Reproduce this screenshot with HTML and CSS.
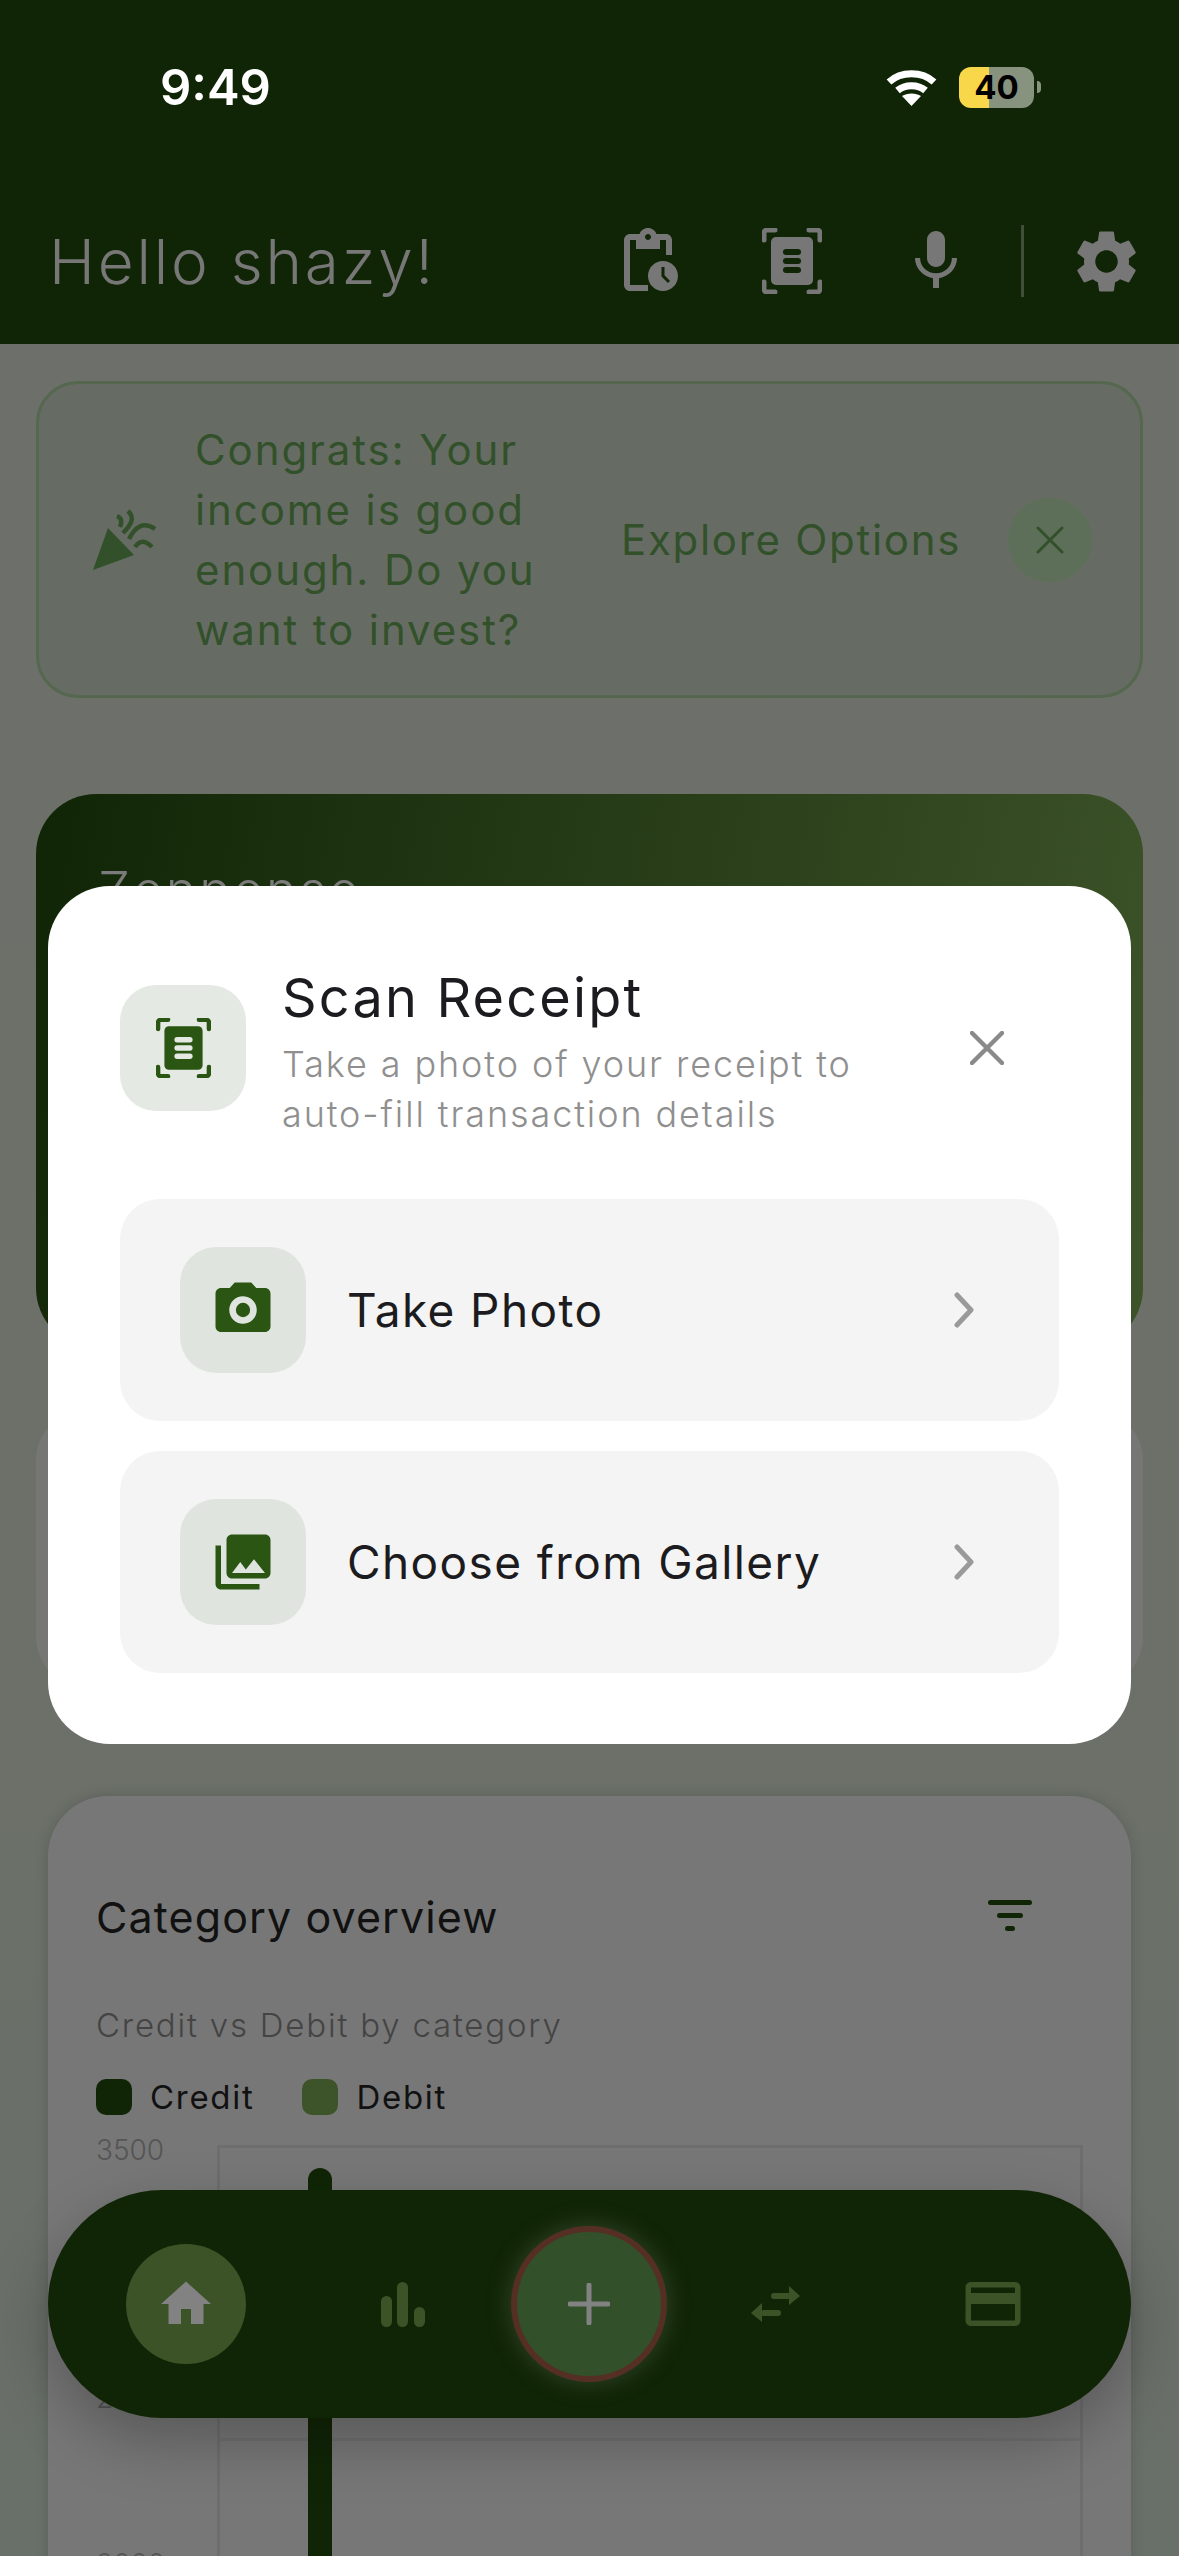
FILE: index.html
```html
<!DOCTYPE html>
<html lang="en">
<head>
    <meta charset="UTF-8">
    <title>Hello shazy</title>
    <link rel="stylesheet" href="styles.css">
</head>
<body>
<div id="screen">
    <div class="header">
        <div class="status-bar">
            <span class="time">9:49</span>
            <svg class="wifi" viewBox="0 0 51 37" width="51" height="37">
                <path d="M3 13 C15 2 36 2 48 13" fill="none" stroke="#fff" stroke-width="7"/>
                <path d="M11.5 21.5 C19 15 32 15 39.5 21.5" fill="none" stroke="#fff" stroke-width="7"/>
                <path d="M25.5 37 L16 27 C21 23.5 30 23.5 35 27 Z" fill="#fff"/>
            </svg>
            <div class="battery"><span>40</span></div>
            <i class="battery-nub"></i>
        </div>
        <div class="app-bar">
            <span class="hello">Hello shazy!</span>
            <svg class="bar-icon" viewBox="0 0 24 24" width="72" height="72"><path d="M17 12c-2.76 0-5 2.24-5 5s2.24 5 5 5 5-2.24 5-5-2.24-5-5-5zm1.65 7.35L16.5 17.2V14h1v2.79l1.85 1.85-.7.71zM18 3h-3.18C14.4 1.84 13.3 1 12 1s-2.4.84-2.82 2H6c-1.1 0-2 .9-2 2v15c0 1.1.9 2 2 2h6v-2H6V5h2v3h8V5h2v5h2V5c0-1.1-.9-2-2-2zm-6 2c-.55 0-1-.45-1-1s.45-1 1-1 1 .45 1 1-.45 1-1 1z"/></svg>
            <svg class="bar-icon scan-top" viewBox="0 0 60 66" width="60" height="66">
                <path d="M2 12V5a3 3 0 0 1 3-3h8M47 2h8a3 3 0 0 1 3 3v7M58 54v7a3 3 0 0 1-3 3h-8M13 64H5a3 3 0 0 1-3-3v-7" fill="none" stroke="#777" stroke-width="5" stroke-linecap="round"/>
                <rect x="9" y="9" width="42" height="48" rx="5"/>
                <rect x="21" y="21" width="18" height="6" rx="3" fill="#102506"/>
                <rect x="21" y="30" width="18" height="6" rx="3" fill="#102506"/>
                <rect x="21" y="39" width="18" height="6" rx="3" fill="#102506"/>
            </svg>
            <svg class="bar-icon mic" viewBox="0 0 24 24" width="72" height="72"><path d="M12 14c1.66 0 3-1.34 3-3V5c0-1.66-1.34-3-3-3S9 3.34 9 5v6c0 1.66 1.34 3 3 3zm5.3-3c0 3-2.54 5.1-5.3 5.1S6.7 14 6.7 11H5c0 3.41 2.72 6.23 6 6.72V21h2v-3.28c3.28-.48 6-3.3 6-6.72h-1.7z"/></svg>
            <i class="bar-divider"></i>
            <svg class="bar-icon gear" viewBox="0 0 24 24" width="75" height="75"><path d="M19.14 12.94c.04-.3.06-.61.06-.94 0-.32-.02-.64-.07-.94l2.03-1.58c.18-.14.23-.41.12-.61l-1.92-3.32c-.12-.22-.37-.29-.59-.22l-2.39.96c-.5-.38-1.03-.7-1.62-.94l-.36-2.54c-.04-.24-.24-.41-.48-.41h-3.84c-.24 0-.43.17-.47.41l-.36 2.54c-.59.24-1.13.57-1.62.94l-2.39-.96c-.22-.08-.47 0-.59.22L2.74 8.87c-.12.21-.08.47.12.61l2.03 1.58c-.05.3-.09.63-.09.94s.02.64.07.94l-2.03 1.58c-.18.14-.23.41-.12.61l1.92 3.32c.12.22.37.29.59.22l2.39-.96c.5.38 1.03.7 1.62.94l.36 2.54c.05.24.24.41.48.41h3.84c.24 0 .44-.17.47-.41l.36-2.54c.59-.24 1.13-.56 1.62-.94l2.39.96c.22.08.47 0 .59-.22l1.92-3.32c.12-.22.07-.47-.12-.61l-2.01-1.58zM12 15.6c-1.98 0-3.6-1.62-3.6-3.6s1.62-3.6 3.6-3.6 3.6 1.62 3.6 3.6-1.62 3.6-3.6 3.6z"/></svg>
        </div>
    </div>

    <div class="content">
        <div class="banner">
            <svg class="party" viewBox="0 0 64 62" width="64" height="62">
                <path d="M15 19 L41 46 L0 61 Z" fill="#32512a"/>
                <g fill="none" stroke="#32512a" stroke-width="4.5">
                    <path d="M24 7 C29 9 29 13 27 18"/>
                    <path d="M35 2 C43 9 37 17 30 24"/>
                    <path d="M36 30 C42 18 50 12 62 20"/>
                    <path d="M42 38 C47 31 52 31 59 38"/>
                </g>
            </svg>
            <div class="banner-text">Congrats: Your<br>income is good<br>enough. Do you<br>want to invest?</div>
            <span class="banner-link">Explore Options</span>
            <div class="banner-close">
                <svg viewBox="0 0 28 28" width="28" height="28"><path d="M2 2 L26 26 M26 2 L2 26" stroke="#32512a" stroke-width="3" stroke-linecap="round"/></svg>
            </div>
        </div>

        <div class="balance-card">
            <span class="balance-title">Zenpense</span>
        </div>

        <div class="stats-card"></div>

        <div class="category-card">
            <div class="category-head">
                <span class="category-title">Category overview</span>
                <svg viewBox="0 0 44 34" width="44" height="34">
                    <rect x="0" y="0" width="44" height="5" rx="2.5" fill="#102506"/>
                    <rect x="9" y="13" width="26" height="5" rx="2.5" fill="#102506"/>
                    <rect x="17" y="26" width="10" height="5" rx="2.5" fill="#102506"/>
                </svg>
            </div>
            <div class="category-sub">Credit vs Debit by category</div>
            <div class="legend">
                <i class="swatch credit"></i><span>Credit</span>
                <i class="swatch debit"></i><span>Debit</span>
            </div>
            <div class="chart">
                <div class="y-axis">
                    <span>3500</span>
                    <span>2500</span>
                    <span>2000</span>
                </div>
                <div class="plot">
                    <div class="plot-row"></div>
                    <div class="plot-row"></div>
                    <i class="chart-bar"></i>
                </div>
            </div>
        </div>
    </div>

    <div class="modal">
        <div class="modal-head">
            <div class="icon-box light">
                <svg viewBox="0 0 60 66" width="55" height="60">
                    <path d="M2 12V5a3 3 0 0 1 3-3h8M47 2h8a3 3 0 0 1 3 3v7M58 54v7a3 3 0 0 1-3 3h-8M13 64H5a3 3 0 0 1-3-3v-7" fill="none" stroke="#2a5512" stroke-width="5" stroke-linecap="round"/>
                    <rect x="9" y="9" width="42" height="48" rx="5" fill="#2a5512"/>
                    <rect x="20" y="21" width="20" height="6" rx="3" fill="#e4e9e3"/>
                    <rect x="20" y="30" width="20" height="6" rx="3" fill="#e4e9e3"/>
                    <rect x="20" y="39" width="20" height="6" rx="3" fill="#e4e9e3"/>
                </svg>
            </div>
            <div class="modal-title-box">
                <div class="modal-title">Scan Receipt</div>
                <div class="modal-sub">Take a photo of your receipt to<br>auto-fill transaction details</div>
            </div>
            <svg class="modal-close" viewBox="0 0 34 34" width="34" height="34"><path d="M2 2 L32 32 M32 2 L2 32" stroke="#8a8a8a" stroke-width="4.5" stroke-linecap="round"/></svg>
        </div>

        <div class="option">
            <div class="icon-box">
                <svg viewBox="0 0 24 24" width="66" height="66"><path d="M9 2 7.17 4H4c-1.1 0-2 .9-2 2v12c0 1.1.9 2 2 2h16c1.1 0 2-.9 2-2V6c0-1.1-.9-2-2-2h-3.17L15 2H9zm3 15c-2.76 0-5-2.24-5-5s2.24-5 5-5 5 2.24 5 5-2.24 5-5 5z" fill="#2a5512"/><circle cx="12" cy="12" r="2.6" fill="#2a5512"/></svg>
            </div>
            <span class="option-label">Take Photo</span>
            <svg class="chevron" viewBox="0 0 20 36" width="20" height="36"><path d="M3 3 L17 18 L3 33" fill="none" stroke="#9a9a9a" stroke-width="5" stroke-linecap="round" stroke-linejoin="round"/></svg>
        </div>
        <div class="option">
            <div class="icon-box">
                <svg viewBox="0 0 24 24" width="66" height="66"><path d="M22 16V4c0-1.1-.9-2-2-2H8c-1.1 0-2 .9-2 2v12c0 1.1.9 2 2 2h12c1.1 0 2-.9 2-2zm-11-4 2.03 2.71L16 11l4 5H8l3-4zM2 6v14c0 1.1.9 2 2 2h14v-2H4V6H2z" fill="#2a5512"/></svg>
            </div>
            <span class="option-label">Choose from Gallery</span>
            <svg class="chevron" viewBox="0 0 20 36" width="20" height="36"><path d="M3 3 L17 18 L3 33" fill="none" stroke="#9a9a9a" stroke-width="5" stroke-linecap="round" stroke-linejoin="round"/></svg>
        </div>
    </div>

    <div class="bottom-nav">
        <div class="nav-item home">
            <svg viewBox="0 0 24 24" width="60" height="60"><path d="M10 20v-6h4v6h5v-8h3L12 3 2 12h3v8z" fill="#828282"/></svg>
        </div>
        <div class="nav-item bars">
            <svg viewBox="0 0 44 46" width="44" height="46" fill="#3c5328">
                <rect x="0" y="15" width="11" height="31" rx="5.5"/>
                <rect x="16" y="1" width="11" height="45" rx="5.5"/>
                <rect x="33" y="26" width="11" height="20" rx="5.5"/>
            </svg>
        </div>
        <div class="nav-add">
            <svg viewBox="0 0 42 42" width="42" height="42"><path d="M21 2V40M2 21H40" stroke="#828282" stroke-width="5" stroke-linecap="round"/></svg>
        </div>
        <div class="nav-item swap">
            <svg viewBox="0 0 50 36" width="50" height="36" fill="#3c5328">
                <rect x="20" y="7" width="20" height="6" rx="3"/>
                <path d="M38 0 L49 10 L38 19 Z"/>
                <rect x="10" y="24" width="20" height="6" rx="3"/>
                <path d="M11 17 L0 27 L11 36 Z"/>
            </svg>
        </div>
        <div class="nav-item card">
            <svg viewBox="0 0 24 24" width="66" height="66"><path d="M20 4H4c-1.11 0-1.99.89-1.99 2L2 18c0 1.11.89 2 2 2h16c1.11 0 2-.89 2-2V6c0-1.11-.89-2-2-2zm0 14H4v-6h16v6zm0-10H4V6h16v2z" fill="#3c5328"/></svg>
        </div>
    </div>
</div>
</body>
</html>
```

FILE: styles.css
```css
*{
    padding:0;
    margin: 0;
    box-sizing: border-box;
}
html, body{
    width: 1179px;
    height: 2556px;
    overflow: hidden;
}
body{
    font-family: Inter, "Noto Sans", sans-serif;
}
#screen{
    width: 1179px;
    height: 2556px;
    position: relative;
    overflow: hidden;
    background: linear-gradient(#6d706a, #6c7069 60%, #697069);
}

/* header */
.header{
    height: 344px;
    background: #102506;
}
.status-bar{
    height: 178px;
    padding: 66px 0 0 160px;
    display: flex;
    align-items: flex-start;
}
.time{
    font-size: 49px;
    line-height: 44px;
    font-weight: 600;
    color: #fff;
    width: 726px;
}
.wifi{
    margin: 3px 22px 0 0;
}
.battery{
    width: 75px;
    height: 41px;
    margin-top: 1px;
    border-radius: 12px;
    background: linear-gradient(90deg, #f8d84a 40%, #87927f 40%);
    text-align: center;
    font-size: 33px;
    line-height: 41px;
    font-weight: 700;
    color: #000;
}
.battery-nub{
    width: 4px;
    height: 12px;
    margin: 15px 0 0 3px;
    border-radius: 0 6px 6px 0;
    background: #87927f;
}
.app-bar{
    height: 166px;
    padding: 0 35px 0 49px;
    display: flex;
    align-items: center;
}
.hello{
    font-size: 62px;
    font-weight: 300;
    letter-spacing: 2.8px;
    color: #777;
    width: 563px;
}
.bar-icon{
    fill: #777;
    flex: none;
}
.scan-top{
    margin-left: 78px;
}
.mic{
    margin-left: 78px;
}
.bar-divider{
    width: 3px;
    height: 72px;
    margin: 0 45px 0 49px;
    background: #3f4f38;
}

/* cards behind the sheet */
.content{
    padding: 37px 36px 0;
}
.banner{
    height: 317px;
    border: 3px solid #55674f;
    border-radius: 42px;
    background: #666c63;
    display: flex;
    align-items: center;
    padding-left: 54px;
}
.party{
    flex: none;
    margin-right: 38px;
}
.banner-text{
    width: 426px;
    font-size: 42px;
    line-height: 60px;
    letter-spacing: 1.9px;
    color: #32512a;
}
.banner-link{
    width: 387px;
    font-size: 42px;
    letter-spacing: 1.7px;
    color: #32512a;
    white-space: nowrap;
}
.banner-close{
    width: 84px;
    height: 84px;
    border-radius: 50%;
    background: #5d6f58;
    display: flex;
    align-items: center;
    justify-content: center;
    flex: none;
}
.balance-card{
    height: 554px;
    margin-top: 96px;
    border-radius: 60px;
    background: linear-gradient(100deg, #102506, #3d5329);
    padding: 65px 62px;
}
.balance-title{
    font-size: 52px;
    font-weight: 300;
    letter-spacing: 2.7px;
    color: #7b7b7b;
}
.stats-card{
    height: 277px;
    margin-top: 62px;
    border-radius: 50px;
    background: #767775;
}
.category-card{
    height: 900px;
    margin: 109px 12px 0;
    padding: 90px 48px 0 48px;
    border-radius: 60px;
    background: #777;
    box-shadow: 0 0 12px rgba(60, 70, 60, .35);
}
.category-head{
    height: 62px;
    display: flex;
    align-items: center;
    justify-content: space-between;
    padding-right: 51px;
}
.category-title{
    font-size: 43px;
    font-weight: 400;
    letter-spacing: 1.1px;
    color: #111;
}
.category-sub{
    margin-top: 57px;
    font-size: 33px;
    font-weight: 300;
    letter-spacing: 1.8px;
    color: #444;
}
.legend{
    margin-top: 32px;
    display: flex;
    align-items: center;
    font-size: 33px;
    letter-spacing: 1.7px;
    color: #111;
}
.legend span{
    margin-right: 48px;
}
.swatch{
    width: 36px;
    height: 36px;
    border-radius: 10px;
    margin-right: 18px;
}
.swatch.credit{
    background: #102506;
}
.swatch.debit{
    background: #3d5329;
}
.chart{
    margin-top: 28px;
    display: flex;
}
.y-axis{
    width: 121px;
    margin-top: -12px;
    font-size: 28px;
    line-height: 34px;
    font-weight: 300;
    color: #555;
    display: flex;
    flex-direction: column;
}
.y-axis span:nth-child(2){
    margin-top: 214px;
}
.y-axis span:nth-child(3){
    margin-top: 132px;
}
.plot{
    width: 866px;
    height: 500px;
    border: 3px solid rgba(0, 0, 0, .07);
    position: relative;
}
.plot-row{
    height: 293px;
    border-bottom: 3px solid rgba(0, 0, 0, .06);
}
.chart-bar{
    position: absolute;
    left: 88px;
    top: 20px;
    bottom: 0;
    width: 24px;
    border-radius: 12px 12px 0 0;
    background: #102506;
}

/* scan receipt sheet */
.modal{
    position: absolute;
    left: 48px;
    top: 886px;
    width: 1083px;
    height: 858px;
    padding: 72px 72px 0;
    border-radius: 62px;
    background: #fff;
}
.modal-head{
    display: flex;
    align-items: center;
    height: 180px;
    margin-bottom: 61px;
}
.icon-box{
    width: 126px;
    height: 126px;
    border-radius: 36px;
    background: #dfe5de;
    display: flex;
    align-items: center;
    justify-content: center;
    flex: none;
}
.icon-box.light{
    background: #e4e9e3;
}
.modal-title-box{
    margin: 8px 0 0 36px;
    width: 688px;
    flex: none;
}
.modal-title{
    font-size: 54px;
    font-weight: 400;
    letter-spacing: 2.2px;
    color: #1c1c20;
    line-height: 66px;
    margin-bottom: 8px;
}
.modal-sub{
    font-size: 36px;
    line-height: 50px;
    font-weight: 300;
    letter-spacing: 1.9px;
    color: #8f8f8f;
}
.modal-close{
    flex: none;
}
.option{
    height: 222px;
    margin-bottom: 30px;
    padding: 0 85px 0 60px;
    border-radius: 40px;
    background: #f4f4f4;
    display: flex;
    align-items: center;
}
.option-label{
    margin-left: 41px;
    flex: 1;
    font-size: 46px;
    letter-spacing: 1.4px;
    color: #1c1c20;
}

/* bottom nav */
.bottom-nav{
    position: absolute;
    left: 48px;
    top: 2190px;
    width: 1083px;
    height: 228px;
    border-radius: 114px;
    background: #102506;
    box-shadow: 0 24px 60px rgba(0, 0, 0, .25);
    display: flex;
    align-items: center;
    padding: 0 78px;
}
.nav-item{
    width: 120px;
    height: 120px;
    border-radius: 50%;
    display: flex;
    align-items: center;
    justify-content: center;
    flex: none;
}
.nav-item.home{
    background: #3c5328;
}
.nav-item.bars{
    margin: 0 48px 0 97px;
}
.nav-item.swap{
    margin: 0 97px 0 49px;
}
.nav-add{
    width: 156px;
    height: 156px;
    border-radius: 50%;
    border: 6px solid #562f24;
    background: #325029;
    box-shadow: 0 0 24px rgba(120, 130, 110, .35);
    display: flex;
    align-items: center;
    justify-content: center;
    flex: none;
}
```
